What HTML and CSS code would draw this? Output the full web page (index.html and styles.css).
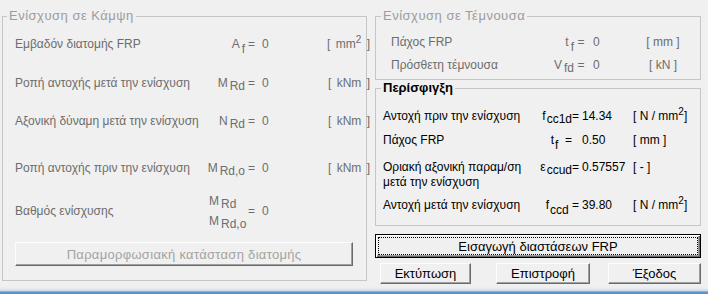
FILE: index.html
```html
<!DOCTYPE html>
<html lang="el">
<head>
    <meta charset="UTF-8">
    <title>Ενίσχυση FRP</title>
    <link rel="stylesheet" href="styles.css">
</head>
<body>
    <div class="window">
        <fieldset class="group group-bend is-disabled">
            <legend>Ενίσχυση σε Κάμψη</legend>

            <div class="row bend-row r1">
                <span class="label">Εμβαδόν διατομής FRP</span>
                <span class="sym">A<sub class="low">f</sub></span>
                <span class="eq">=</span>
                <span class="val">0</span>
                <span class="unit">[ mm<sup>2</sup> ]</span>
            </div>
            <div class="row bend-row r2">
                <span class="label">Ροπή αντοχής μετά την ενίσχυση</span>
                <span class="sym">M<sub>Rd</sub></span>
                <span class="eq">=</span>
                <span class="val">0</span>
                <span class="unit">[ kNm ]</span>
            </div>
            <div class="row bend-row r3">
                <span class="label">Αξονική δύναμη μετά την ενίσχυση</span>
                <span class="sym">N<sub>Rd</sub></span>
                <span class="eq">=</span>
                <span class="val">0</span>
                <span class="unit">[ kNm ]</span>
            </div>
            <div class="row bend-row r4">
                <span class="label">Ροπή αντοχής πριν την ενίσχυση</span>
                <span class="sym">M<sub>Rd,o</sub></span>
                <span class="eq">=</span>
                <span class="val">0</span>
                <span class="unit">[ kNm ]</span>
            </div>
            <div class="row bend-row r5">
                <span class="label">Βαθμός ενίσχυσης</span>
                <span class="sym frac">
                    <span>M<sub>Rd</sub></span>
                    <span>M<sub>Rd,o</sub></span>
                </span>
                <span class="eq">=</span>
                <span class="val">0</span>
                <span class="unit"></span>
            </div>

            <button class="btn btn-strain" disabled>Παραμορφωσιακή κατάσταση διατομής</button>
        </fieldset>

        <div class="side">
            <fieldset class="group group-shear is-disabled">
                <legend>Ενίσχυση σε Τέμνουσα</legend>
                <div class="row shear-row s1">
                    <span class="label">Πάχος FRP</span>
                    <span class="sym">t<sub class="low">f</sub></span>
                    <span class="eq">=</span>
                    <span class="val">0</span>
                    <span class="unit">[ mm ]</span>
                </div>
                <div class="row shear-row s2">
                    <span class="label">Πρόσθετη τέμνουσα</span>
                    <span class="sym">V<sub>fd</sub></span>
                    <span class="eq">=</span>
                    <span class="val">0</span>
                    <span class="unit">[ kN ]</span>
                </div>
            </fieldset>

            <fieldset class="group group-confine">
                <legend>Περίσφιγξη</legend>
                <div class="row conf-row c1">
                    <span class="label">Αντοχή πριν την ενίσχυση</span>
                    <span class="sym">f<sub>cc1d</sub>=</span>
                    <span class="val">14.34</span>
                    <span class="unit">[ N / mm<sup>2</sup>]</span>
                </div>
                <div class="row conf-row c2">
                    <span class="label">Πάχος FRP</span>
                    <span class="sym sym-tf">t<sub class="low">f</sub> &nbsp;=</span>
                    <span class="val">0.50</span>
                    <span class="unit">[ mm ]</span>
                </div>
                <div class="row conf-row c3">
                    <span class="label">Οριακή αξονική παραμ/ση<br>μετά την ενίσχυση</span>
                    <span class="sym">ε<sub>ccud</sub>=</span>
                    <span class="val">0.57557</span>
                    <span class="unit">[ - ]</span>
                </div>
                <div class="row conf-row c4">
                    <span class="label">Αντοχή μετά την ενίσχυση</span>
                    <span class="sym">f<sub class="low">ccd</sub> =</span>
                    <span class="val">39.80</span>
                    <span class="unit">[ N / mm<sup>2</sup>]</span>
                </div>
            </fieldset>

            <button class="btn btn-default">Εισαγωγή διαστάσεων FRP</button>

            <div class="actions">
                <button class="btn btn-action">Εκτύπωση</button>
                <button class="btn btn-action btn-back">Επιστροφή</button>
                <button class="btn btn-action btn-exit">Έξοδος</button>
            </div>
        </div>
    </div>
    <div class="taskbar"></div>
</body>
</html>
```

FILE: styles.css
```css
* {
    box-sizing: border-box;
}

html, body {
    margin: 0;
    padding: 0;
}

body {
    width: 708px;
    height: 294px;
    overflow: hidden;
    background: #f0f0f0;
    font-family: 'Liberation Sans', Arial, sans-serif;
    font-size: 12px;
    color: #000;
}

.window {
    display: flex;
    height: 286px;
    padding: 8px 0 0 2px;
}

/* group boxes */
.group {
    margin: 0;
    padding: 0;
    border: 1px solid #c6c6c6;
    min-width: 0;
}

.group legend {
    padding: 0 2px;
    line-height: 16px;
    font-size: 13px;
}

.is-disabled {
    color: #6d6d6d;
}

.is-disabled legend {
    color: #9c9c9c;
    letter-spacing: 0.5px;
}

.group-bend {
    width: 365px;
    height: 273px;
    padding-left: 12px;
}

.group-bend legend {
    margin-left: -8px;
}

.side {
    display: flex;
    flex-direction: column;
    width: 326px;
    margin-left: 8px;
}

.group-shear {
    height: 72px;
    padding-left: 15px;
}

.group-shear legend {
    margin-left: -10px;
}

.group-confine {
    height: 146px;
    padding-left: 7px;
}

.group-confine legend {
    margin-left: -2px;
    font-weight: bold;
    color: #000;
}

/* rows */
.row {
    display: grid;
    align-items: center;
    height: 20px;
    white-space: nowrap;
}

.row sub {
    font-size: 12px;
    vertical-align: -3px;
    line-height: 0;
    margin-left: 2px;
}

.row sub.low {
    vertical-align: -5px;
}

.row sup {
    font-size: 10px;
    vertical-align: 5px;
    line-height: 0;
}

.sym {
    text-align: right;
}

.eq {
    text-align: center;
}

.bend-row {
    grid-template-columns: 190px 40px 13px 56px 56px;
}

.bend-row .val {
    padding-left: 4px;
}

.bend-row .unit {
    text-align: right;
    word-spacing: 2px;
}

.r1 { margin-top: 10px; }
.r2 { margin-top: 19px; }
.r3 { margin-top: 18px; }
.r4 { margin-top: 27px; }
.r5 { margin-top: 12px; height: 42px; }

.frac {
    display: flex;
    flex-direction: column;
    text-align: left;
    padding-left: 4px;
    line-height: 20px;
}

.btn {
    font-family: 'Liberation Sans', Arial, sans-serif;
    font-size: 13px;
    color: #000;
    background: #f0f0f0;
    border: 1px solid;
    border-color: #fdfdfd #6b6b6b #6b6b6b #fdfdfd;
    box-shadow: inset -1px -1px #a0a0a0;
    padding: 0;
}

.btn-strain {
    display: block;
    width: 338px;
    height: 24px;
    margin-top: 10px;
    color: #a3a3a3;
    letter-spacing: 0.3px;
}

.shear-row {
    grid-template-columns: 143px 40px 14px 52px 46px;
}

.shear-row .val {
    padding-left: 5px;
}

.shear-row .unit {
    text-align: center;
}

.s1 { margin-top: 8px; }
.s2 { margin-top: 3px; }

.conf-row {
    grid-template-columns: 147px 49px 52px 60px;
}

.conf-row .sym sub {
    margin-left: 1px;
}

.conf-row .val {
    padding-left: 3px;
}

.conf-row .unit {
    padding-left: 2px;
}

.sym-tf {
    padding-right: 7px;
}

.c1 { margin-top: 10px; }
.c2 { margin-top: 4px; }
.c3 {
    margin-top: 10px;
    height: 30px;
    line-height: 15px;
    align-items: start;
}
.c4 { margin-top: 5px; }

.btn-default {
    width: 326px;
    height: 24px;
    margin-top: 8px;
    border: 1px solid #000;
    box-shadow: inset 1px 1px #fff, inset -1px -1px #6b6b6b, inset -2px -2px #a0a0a0;
    outline: 1px dotted #000;
    outline-offset: -4px;
}

.actions {
    display: flex;
    gap: 25px;
    margin-top: 5px;
    padding-left: 5px;
}

.btn-action {
    width: 91px;
    height: 21px;
}

.btn-back {
    width: 94px;
}

.btn-exit {
    width: 93px;
    margin-left: -7px;
}

.taskbar {
    height: 8px;
    background: linear-gradient(#f0f0f0 0, #e4ebf3 3px, #c5d6ea 5px, #5e8fca 6px, #5e8fca 8px);
}
```
